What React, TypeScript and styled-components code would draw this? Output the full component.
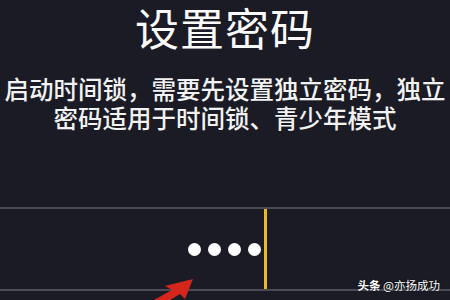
import styled, { createGlobalStyle } from 'styled-components';

const GlobalStyle = createGlobalStyle`
  html, body {
    margin: 0;
    padding: 0;
    background: #1a1b25;
  }
  body {
    font-family: "Noto Sans CJK SC", "Noto Sans", sans-serif;
    color: #fff;
  }
`;

const Screen = styled.div`
  position: relative;
  width: 450px;
  height: 300px;
  overflow: hidden;
  background: #1a1b25;
  display: flex;
  flex-direction: column;
  align-items: center;
`;

const Title = styled.h1`
  margin: 0;
  font-size: 44px;
  line-height: 54px;
  font-weight: 400;
  letter-spacing: 1px;
  color: #fafafa;
`;

const Hint = styled.p`
  margin: 20px 0 0;
  font-size: 24.5px;
  line-height: 29px;
  font-weight: 500;
  text-align: center;
  white-space: nowrap;
  color: #f2f2f2;
`;

const Field = styled.div`
  margin-top: 75px;
  width: 100%;
  height: 80px;
  border-top: 2px solid #4a4b55;
  border-bottom: 2px solid #4a4b55;
  display: flex;
  justify-content: center;
  align-items: stretch;
  padding-left: 4px;
  box-sizing: content-box;
`;

const Dots = styled.div`
  display: flex;
  align-items: center;
  gap: 7px;
`;

const Dot = styled.span`
  width: 13px;
  height: 13px;
  border-radius: 50%;
  background: #fff;
`;

const Cursor = styled.span`
  width: 3px;
  margin-left: 3px;
  background: #e8b92a;
`;

const Watermark = styled.div`
  position: absolute;
  right: 10px;
  top: 278px;
  font-size: 11.5px;
  line-height: 14px;
  color: #fff;
  text-shadow: 0 0 2px rgba(0, 0, 0, 0.8);
  white-space: nowrap;

  b {
    font-weight: 700;
  }
`;

const Arrow = styled.svg`
  position: absolute;
  left: 140px;
  top: 274px;
`;

export default function App() {
  return (
    <Screen>
      <GlobalStyle />
      <Title>设置密码</Title>
      <Hint>
        启动时间锁，需要先设置独立密码，独立
        <br />
        密码适用于时间锁、青少年模式
      </Hint>
      <Field>
        <Dots>
          {[0, 1, 2, 3].map((i) => (
            <Dot key={i} />
          ))}
        </Dots>
        <Cursor />
      </Field>
      <Watermark>
        <b>头条</b> @亦扬成功
      </Watermark>
      <Arrow width="60" height="26" viewBox="0 0 60 26">
        <path d="M53 5 L25 12 L32 16 L14 26 L30 26 L40 20 L45 25 Z" fill="#d4261a" />
      </Arrow>
    </Screen>
  );
}
